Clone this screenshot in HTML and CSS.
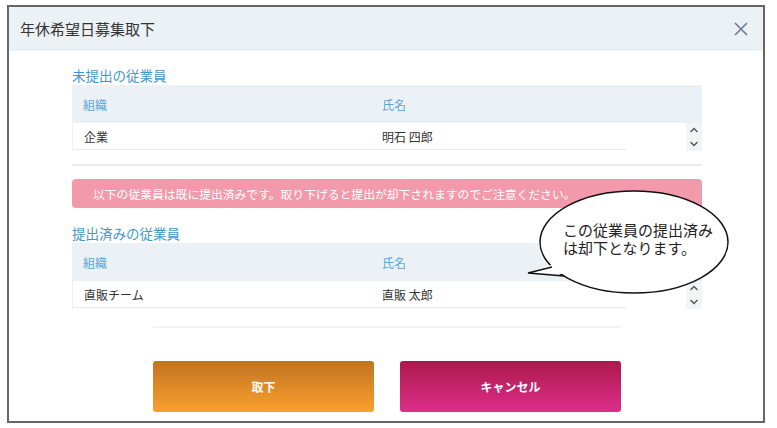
FILE: index.html
```html
<!DOCTYPE html>
<html lang="ja">
<head>
<meta charset="utf-8">
<title>年休希望日募集取下</title>
<link rel="stylesheet" href="styles.css">
</head>
<body>
<div class="dialog">
  <div class="dlg-head">
    <div class="dlg-title">年休希望日募集取下</div>
    <svg class="close" width="14" height="14" viewBox="0 0 14 14"><path d="M1 1L13 13M13 1L1 13" stroke="#6e7f8f" stroke-width="1.7" fill="none"/></svg>
  </div>
  <div class="dlg-body">
    <div class="sec-title first">未提出の従業員</div>
    <div class="tbl">
      <div class="thead"><div class="c1">組織</div><div class="c2">氏名</div></div>
      <div class="tbody">
        <div class="rows"><div class="row"><div class="c1">企業</div><div class="c2">明石 四郎</div></div></div>
        <div class="scroll">
          <svg width="10" height="8" viewBox="0 0 10 8"><path d="M1.5 6L5 2.5L8.5 6" stroke="#555" stroke-width="1.4" fill="none"/></svg>
          <svg width="10" height="8" viewBox="0 0 10 8"><path d="M1.5 2L5 5.5L8.5 2" stroke="#555" stroke-width="1.4" fill="none"/></svg>
        </div>
      </div>
    </div>
    <div class="sep"></div>
    <div class="alert">以下の従業員は既に提出済みです。取り下げると提出が却下されますのでご注意ください。</div>
    <div class="sec-title second">提出済みの従業員</div>
    <div class="tbl">
      <div class="thead"><div class="c1">組織</div><div class="c2">氏名</div></div>
      <div class="tbody">
        <div class="rows"><div class="row"><div class="c1">直販チーム</div><div class="c2">直販 太郎</div></div></div>
        <div class="scroll">
          <svg width="10" height="8" viewBox="0 0 10 8"><path d="M1.5 6L5 2.5L8.5 6" stroke="#555" stroke-width="1.4" fill="none"/></svg>
          <svg width="10" height="8" viewBox="0 0 10 8"><path d="M1.5 2L5 5.5L8.5 2" stroke="#555" stroke-width="1.4" fill="none"/></svg>
        </div>
      </div>
    </div>
    <div class="sep2"></div>
    <div class="actions">
      <div class="btn btn-ok">取下</div>
      <div class="btn btn-cancel">キャンセル</div>
    </div>
  </div>
</div>
<svg class="bubble" width="777" height="428" viewBox="0 0 777 428">
  <ellipse cx="634" cy="242" rx="94" ry="51" fill="#fff" stroke="#111" stroke-width="1.5"/>
  <polygon points="554,264 528,273 566,274 572,268" fill="#fff"/>
  <polyline points="552,267 528,273 564,276" fill="none" stroke="#111" stroke-width="1.5" stroke-linejoin="miter"/>
</svg>
<div class="bubble-text">この従業員の提出済み<br>は却下となります。</div>
</body>
</html>
```

FILE: styles.css
```css
html, body {
  margin: 0;
  padding: 0;
  background: #fff;
}
body {
  position: relative;
  width: 777px;
  height: 428px;
  overflow: hidden;
  padding: 5px 0 0 7px;
  box-sizing: border-box;
  font-family: "Noto Sans CJK JP", "Noto Sans", sans-serif;
  color: #333;
}
.dialog {
  width: 754px;
  height: 414px;
  border: 2px solid #666;
  background: #fff;
}
.dlg-head {
  height: 44px;
  background: #ecf1f6;
  display: flex;
  align-items: center;
  justify-content: space-between;
  padding: 0 15px 0 11px;
}
.dlg-title {
  font-size: 15px;
  line-height: 20px;
  color: #333;
}
.close {
  display: block;
}
.dlg-body {
  padding: 0 61px 0 63px;
}
.sec-title {
  font-size: 13.5px;
  line-height: 20px;
  color: #3f97d0;
}
.sec-title.first { margin-top: 14px; }
.sec-title.second { margin-top: 15px; }
.tbl {
  font-size: 12px;
}
.thead {
  height: 38px;
  background: #ecf1f6;
  display: flex;
  align-items: center;
  color: #5aa7d8;
}
.c1 {
  width: 299px;
  padding-left: 11px;
}
.c2 {
  flex: 1;
}
.tbody {
  display: flex;
  height: 28px;
}
.rows {
  flex: 1;
  border-left: 1px solid #eef0f2;
  background: #fff;
}
.row {
  width: 553px;
  height: 26px;
  display: flex;
  align-items: center;
  border-bottom: 1px solid #e6e8ea;
  color: #333;
}
.row .c1 { width: 298px; }
.scroll {
  width: 16px;
  background: #f3f4f5;
  display: flex;
  flex-direction: column;
  align-items: center;
  justify-content: center;
  gap: 6px;
}
.scroll svg { display: block; }
.sep {
  margin-top: 13px;
  height: 2px;
  background: #e9ebed;
}
.alert {
  margin-top: 13px;
  height: 29px;
  line-height: 29px;
  border-radius: 4px;
  background: #f29aab;
  color: #fff;
  font-size: 11.8px;
  padding-left: 21px;
}
.sep2 {
  margin: 17px 81px 0;
  height: 2px;
  background: #f1f2f3;
}
.actions {
  margin-top: 33px;
  display: flex;
  justify-content: center;
  gap: 26px;
}
.btn {
  width: 221px;
  height: 51px;
  border-radius: 3px;
  display: flex;
  align-items: center;
  justify-content: center;
  color: #fff;
  font-size: 12px;
  font-weight: bold;
}
.btn-ok {
  background: linear-gradient(to bottom, #c17321, #faa02e);
}
.btn-cancel {
  background: linear-gradient(to bottom, #ac194b, #dc2e8b);
}
.bubble {
  position: absolute;
  left: 0;
  top: 0;
  pointer-events: none;
}
.bubble-text {
  position: absolute;
  left: 563px;
  top: 221px;
  font-size: 15px;
  line-height: 18px;
  color: #222;
  white-space: nowrap;
}
```
